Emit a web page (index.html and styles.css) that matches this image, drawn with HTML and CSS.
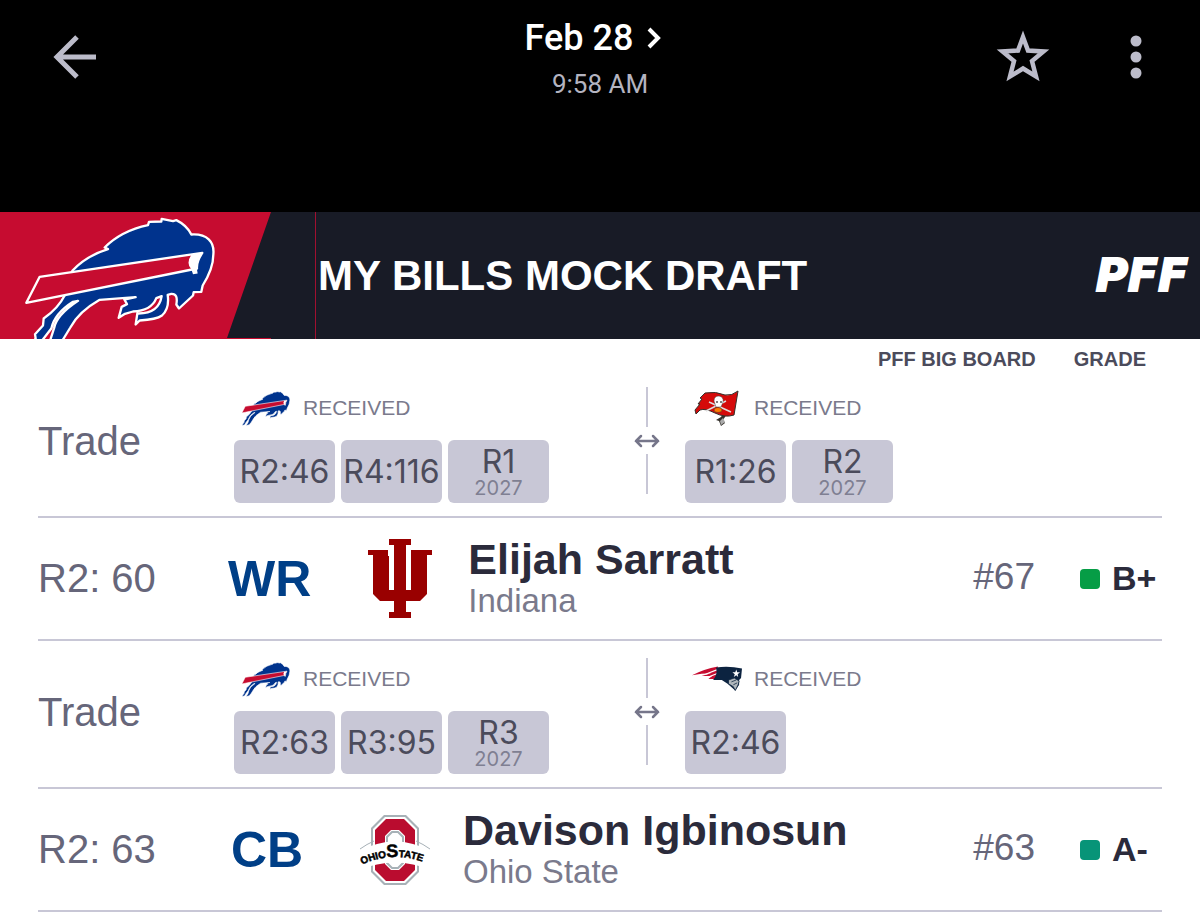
FILE: index.html
```html
<!DOCTYPE html>
<html lang="en">
<head>
<meta charset="utf-8">
<meta name="viewport" content="width=device-width, initial-scale=1">
<title>My Bills Mock Draft</title>
<link rel="stylesheet" href="styles.css">
</head>
<body>
<svg class="defs" aria-hidden="true">
  <symbol id="bison" viewBox="70 45 585 410">
    <g stroke-linejoin="round">
      <path class="bison-body" d="M218 212Q258 168 325 147L315 142Q365 92 445 75L448 65L485 64L486 56L520 63L530 60Q562 76 575 103C622 100 645 125 641 163Q641 205 609 256L605 275L582 276L580 286L538 325L530 313Q536 280 515 281L504 284Q510 325 487 346Q470 358 420 361L408 373L413 340C455 341 480 325 486 288L470 294Q455 332 400 334L376 341L357 353L366 320L382 312L374 298L408 291L300 299Q237 335 212 382L190 418L164 448L128 451L150 425L163 385Q170 345 235 302L220 305Q165 340 155 385L128 420L110 450L80 451L108 415L106 402L130 376L132 355Q175 325 195 286Z"/>
      <path class="bison-stripe" d="M120 230L608 158Q590 185 592 205L80 308Z"/>
      <path fill="#fff" d="M575 164L609 158Q585 180 594 220L580 222L575 207Q558 190 575 164Z"/>
    </g>
  </symbol>
  <symbol id="swap" viewBox="0 0 26 14">
    <path d="M2 7H24M7 2L2 7L7 12M19 2L24 7L19 12" fill="none" stroke="#76768a" stroke-width="2.500" stroke-linecap="round"/>
  </symbol>
</svg>

<header class="appbar">
  <button class="icon-btn" aria-label="Back">
    <svg width="44" height="44" viewBox="0 0 44 44"><path d="M43 22H5M24 2L4 22L24 42" fill="none" stroke="#bcbcca" stroke-width="5"/></svg>
  </button>
  <div class="stamp">
    <button class="date">Feb 28
      <svg width="14" height="22" viewBox="0 0 14 22"><path d="M2 2L11 11L2 20" fill="none" stroke="#fff" stroke-width="4"/></svg>
    </button>
    <time class="time">9:58 AM</time>
  </div>
  <div class="actions">
    <button class="icon-btn" aria-label="Favorite">
      <svg width="54" height="54" viewBox="0 0 54 54"><path d="M27 7L32 20.500L47.500 21.500L36 31L40 46.500L27 38.500L14 46.500L18 31L6.500 21.500L22 20.500Z" fill="none" stroke="#bcbcca" stroke-width="4.500"/></svg>
    </button>
    <button class="icon-btn" aria-label="More options">
      <svg width="12" height="44" viewBox="0 0 12 44"><g fill="#bcbcca"><circle cx="6" cy="6" r="5.500"/><circle cx="6" cy="22" r="5.500"/><circle cx="6" cy="38" r="5.500"/></g></svg>
    </button>
  </div>
</header>

<main class="sheet">
  <div class="banner">
    <div class="banner-team">
      <div class="banner-red"><svg class="banner-bison" aria-label="Buffalo Bills"><use href="#bison"/></svg></div>
    </div>
    <h1 class="banner-title">MY BILLS MOCK DRAFT</h1>
    <span class="pff">PFF</span>
  </div>

  <div class="heads"><span>PFF BIG BOARD</span><span>GRADE</span></div>

  <ul class="draft">
    <li class="trade">
      <span class="label">Trade</span>
      <div class="side">
        <div class="side-head"><svg class="team bison-sm" aria-label="Bills"><use href="#bison"/></svg><span>RECEIVED</span></div>
        <div class="picks"><div class="pick">R2:46</div><div class="pick">R4:116</div><div class="pick">R1<small>2027</small></div></div>
      </div>
      <div class="divider"><i></i><svg width="26" height="14"><use href="#swap"/></svg><i></i></div>
      <div class="side">
        <div class="side-head">
          <svg class="team" viewBox="0 0 50 36" aria-label="Buccaneers">
            <path d="M29 27L34 19L37 21L31 30L33 33L29 36L27 31L24 30Z" fill="#34302b"/>
            <path d="M3 20L8 14L6 14L10 9L8 8L13 3Q24 1 33 5Q40 6 46 1L42 25Q33 28 23 23Q13 18 8 20L4 24Z" fill="#d50a0a" stroke="#34302b"/>
            <path d="M14 21L34 11M17 12L39 22" stroke="#ddd" stroke-width="1.500"/>
            <path d="M22 11Q22 6 27 6Q32 7 31 12L29 17H24Z" fill="#fff" stroke="#444" stroke-width=".5"/>
            <path d="M24 12h2M28 12h2" stroke="#555" stroke-width="1.500"/>
            <ellipse cx="26" cy="20" rx="4" ry="2.500" fill="#ff7900" stroke="#34302b" stroke-width=".5"/>
            <path d="M28 31L31 28L33 32L29 35Z" fill="#aaa"/>
          </svg><span>RECEIVED</span>
        </div>
        <div class="picks"><div class="pick">R1:26</div><div class="pick">R2<small>2027</small></div></div>
      </div>
    </li>

    <li class="player">
      <span class="label">R2: 60</span>
      <span class="pos">WR</span>
      <svg class="college" viewBox="0 0 72 80" aria-label="Indiana Hoosiers">
        <path fill="#990000" d="M25 0H47V6H42V51H47V16H43V11H68V16H63V55L56 62H42V73H47V79H25V73H30V62H16L9 55V16H4V11H29V16H25V51H30V6H25Z"/>
        <path fill="#fff" d="M25 10H30V50H25V17H24V10ZM42 10H47V17H47V50H42Z"/>
      </svg>
      <div class="who"><h2>Elijah Sarratt</h2><p>Indiana</p></div>
      <span class="board">#67</span>
      <span class="grade green"><i></i>B+</span>
    </li>

    <li class="trade">
      <span class="label">Trade</span>
      <div class="side">
        <div class="side-head"><svg class="team bison-sm" aria-label="Bills"><use href="#bison"/></svg><span>RECEIVED</span></div>
        <div class="picks"><div class="pick">R2:63</div><div class="pick">R3:95</div><div class="pick">R3<small>2027</small></div></div>
      </div>
      <div class="divider"><i></i><svg width="26" height="14"><use href="#swap"/></svg><i></i></div>
      <div class="side">
        <div class="side-head">
          <svg class="team" viewBox="0 0 52 36" aria-label="Patriots">
            <path d="M0 14Q12 8 27 5L25 18L17 18L21 15L10 15L20 12Q10 12 0 14Z" fill="#c60c30"/>
            <path d="M14 13L27 8M17 16L27 12" stroke="#fff" stroke-width="1.200"/>
            <path d="M25 6Q38 4 52 7L51 17L49 19L49 24L45 30L37 23L31 19L22 19Q27 13 25 6Z" fill="#0c2340"/>
            <path d="M38 19L44 17L49 20L48 24L45 30L43 26L38 23Z" fill="#b0b7bc" stroke="#0c2340" stroke-width=".8"/>
            <path d="M41 21L46 19M43 24L47 22" stroke="#0c2340" stroke-width=".8"/>
            <path d="M46 8L47 11L50 11L47.500 13L48 16L46 14L43.500 16L44.500 13L42 11L45 11Z" fill="#fff"/>
          </svg><span>RECEIVED</span>
        </div>
        <div class="picks"><div class="pick">R2:46</div></div>
      </div>
    </li>

    <li class="player">
      <span class="label">R2: 63</span>
      <span class="pos">CB</span>
      <svg class="college" viewBox="0 0 72 80" aria-label="Ohio State Buckeyes">
        <path id="osu-arc" fill="none" d="M2 55Q36 39 72 55"/>
        <path fill="#a7b1b7" d="M25 5H47L60 18V62L47 75H25L12 62V18Z"/>
        <path fill="#fff" d="M26 7H46L58 19V61L46 73H26L14 61V19Z"/>
        <path fill="#ba0c2f" d="M27 9H45L56 20V60L45 71H27L16 60V20Z"/>
        <path fill="#fff" d="M32 20H40L46 26V54L40 60H32L26 54V26Z"/>
        <path fill="none" stroke="#a7b1b7" stroke-width="2" d="M33 22H39L44 27V53L39 58H33L28 53V27Z"/>
        <path fill="#fff" d="M0 41Q36 22 72 41V60Q36 45 0 60Z"/>
        <path fill="none" stroke="#a7b1b7" d="M1 39Q8 34 15 31M57 31Q64 34 71 39"/>
        <text class="osu"><textPath href="#osu-arc" startOffset="1">OHIO<tspan class="osu-s">S</tspan>TATE</textPath></text>
      </svg>
      <div class="who"><h2>Davison Igbinosun</h2><p>Ohio State</p></div>
      <span class="board">#63</span>
      <span class="grade teal"><i></i>A-</span>
    </li>
  </ul>
</main>
</body>
</html>
```

FILE: styles.css
```css
* { box-sizing: border-box; }
body {
  margin: 0;
  min-height: 100vh;
  display: flex;
  flex-direction: column;
  background: #000;
  font-family: "Liberation Sans", Arial, sans-serif;
}
button {
  padding: 0;
  border: 0;
  background: none;
  color: inherit;
  font: inherit;
}
h1, h2, p, ul { margin: 0; padding: 0; font-weight: inherit; }
svg { display: block; flex: none; }
.defs { position: absolute; width: 0; height: 0; }

.appbar {
  min-height: 212px;
  padding: 16px 53px 0;
  display: grid;
  grid-template-columns: 1fr auto 1fr;
  align-items: start;
  color: #fff;
  font-family: Roboto, sans-serif;
}
.icon-btn {
  height: 82px;
  display: flex;
  align-items: center;
}
.stamp {
  display: flex;
  flex-direction: column;
  align-items: center;
}
.date {
  display: flex;
  align-items: center;
  gap: 14px;
  padding-right: 14px;
  font-size: 36px;
  font-weight: 500;
  line-height: 44px;
}
.time {
  color: #b4b4c0;
  font-size: 26px;
  line-height: 48px;
}
.actions {
  display: flex;
  justify-content: flex-end;
  gap: 80px;
  padding-right: 5px;
}

.sheet { flex: 1; background: #fff; }
.banner {
  min-height: 127px;
  padding-right: 12px;
  display: flex;
  align-items: center;
  background: #181b26;
  color: #fff;
}
.banner-team {
  align-self: stretch;
  display: flex;
  width: 316px;
  margin-right: 2px;
  border-right: 1px solid #a01030;
}
.banner-red {
  width: 271px;
  overflow: hidden;
  background: #c60c30;
  clip-path: polygon(0 0, 100% 0, 227px calc(100% - 1px), 100% calc(100% - 1px), 100% 100%, 0 100%);
}
.banner-bison {
  width: 195px;
  height: 137px;
  margin: 3px 0 -40px 23px;
}
.bison-body { fill: #00338d; stroke: #fff; stroke-width: 7px; }
.bison-stripe { fill: #c60c30; stroke: #fff; stroke-width: 7px; }
.banner-title {
  flex: 1;
  font-size: 42px;
  font-weight: 700;
}
.pff {
  font-family: "DejaVu Sans", sans-serif;
  font-size: 44px;
  font-style: italic;
  font-weight: 700;
  line-height: 52px;
  -webkit-text-stroke: 2px #fff;
}

.heads {
  padding: 5px 54px 0 38px;
  margin-bottom: -5px;
  display: flex;
  justify-content: flex-end;
  gap: 38px;
  color: #4b4b5b;
  font-size: 20px;
  font-weight: 700;
  line-height: 31px;
}
.draft { list-style: none; padding: 0 38px; }
.draft > li { border-bottom: 2px solid #c8c7d6; }
.label {
  align-self: center;
  color: #66667a;
  font-size: 40px;
}

.trade {
  min-height: 148px;
  display: grid;
  grid-template-columns: 196px 376px 74px 1fr;
}
.trade .label { padding-bottom: 4px; }
.side { padding-top: 20px; }
.side-head {
  height: 36px;
  margin: 0 0 14px 7px;
  display: flex;
  align-items: center;
  gap: 12px;
  color: #7a7a8c;
  font-size: 21px;
}
.divider + .side { padding-left: 1px; }
.team { width: 50px; height: 36px; }
.bison-sm .bison-body { stroke-width: 3px; }
.bison-sm .bison-stripe { stroke-width: 5px; }
.picks { display: flex; gap: 6px; }
.pick {
  width: 101px;
  height: 63px;
  display: flex;
  flex-direction: column;
  align-items: center;
  justify-content: center;
  border-radius: 6px;
  background: #c8c7d6;
  color: #4b4b5b;
  font-family: Inter, sans-serif;
  font-size: 32px;
  line-height: 32px;
  white-space: nowrap;
}
.pick small {
  color: #7f7f92;
  font-size: 20px;
  line-height: 20px;
}
.divider {
  padding: 17px 0 22px;
  display: flex;
  flex-direction: column;
  align-items: center;
  justify-content: space-between;
}
.divider i { width: 2px; height: 40px; background: #c8c7d6; }

.player {
  min-height: 123px;
  display: flex;
  align-items: center;
}
.player .label { width: 190px; }
.pos {
  min-width: 78px;
  color: #003f87;
  font-size: 50px;
  font-weight: 700;
  text-align: center;
}
.college { width: 72px; height: 80px; margin: 0 32px 0 53px; }
.osu {
  font-size: 10px;
  font-weight: 700;
  stroke: #000;
  stroke-width: .5px;
}
.osu-s { font-size: 18px; }
.who { flex: 1; padding-top: 1px; }
.who h2 {
  color: #2b2b3b;
  font-size: 43px;
  font-weight: 700;
  line-height: 44px;
}
.who p {
  color: #7a7a8c;
  font-size: 33px;
  line-height: 40px;
}
.board {
  margin-right: 45px;
  padding-bottom: 4px;
  color: #66667a;
  font-size: 37px;
}
.grade {
  width: 82px;
  display: flex;
  align-items: center;
  gap: 12px;
  color: #2b2b3b;
  font-size: 34px;
  font-weight: 700;
  white-space: nowrap;
}
.grade i { flex: none; width: 20px; height: 20px; border-radius: 4px; }
.green i { background: #069d46; }
.teal i { background: #079478; }
```
